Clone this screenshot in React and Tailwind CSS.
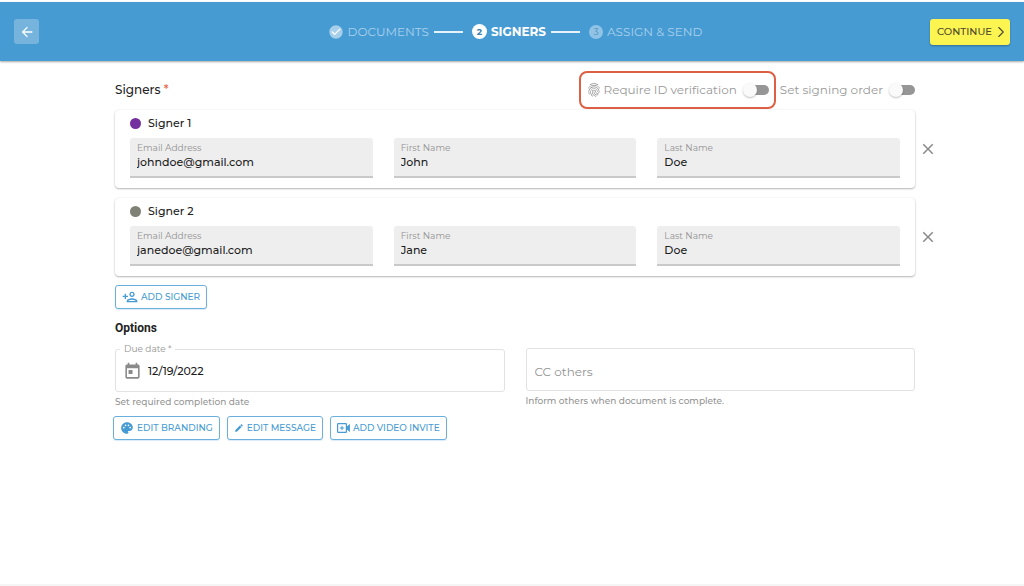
import React, { useState } from 'react';
import {
  MdArrowBack,
  MdCheckCircle,
  MdClose,
  MdEdit,
  MdFingerprint,
  MdOutlinePersonAdd,
  MdPalette,
  MdToday,
} from 'react-icons/md';
import { FiChevronRight } from 'react-icons/fi';

const INITIAL_SIGNERS = [
  { id: 1, dot: 'bg-[#742f9e]', email: 'johndoe@gmail.com', first: 'John', last: 'Doe' },
  { id: 2, dot: 'bg-[#7f8174]', email: 'janedoe@gmail.com', first: 'Jane', last: 'Doe' },
];

function VideoPlusIcon() {
  return (
    <svg viewBox="0 0 13 10" className="h-2.5 w-[13px] shrink-0" fill="none" stroke="currentColor" aria-hidden="true">
      <rect x="0.6" y="0.6" width="8.8" height="8.8" rx="0.6" strokeWidth="1.2" />
      <path d="M5 2.8v4.4M2.8 5h4.4" strokeWidth="1" />
      <path d="M9.6 4.3 12.6 1.6v6.8L9.6 5.7z" fill="currentColor" strokeWidth="0.8" />
    </svg>
  );
}

function Header() {
  return (
    <header className="mt-0.5 grid h-[59px] grid-cols-[1fr_auto_1fr] items-center bg-[#469bd3] px-3.5 shadow-[0_1px_2px_rgba(0,0,0,0.35)]">
      <button
        type="button"
        aria-label="Back"
        className="flex size-[25px] items-center justify-center rounded-[3px] bg-[#76b4de] text-white"
      >
        <MdArrowBack className="size-4" />
      </button>
      <ol className="flex items-center gap-[5px] pl-1.5 text-xs text-[#a9d0eb]">
        <li className="flex items-center gap-1">
          <MdCheckCircle className="size-4 rounded-full text-[#a6cfeb] [background:radial-gradient(white_50%,transparent_52%)]" />
          <span>DOCUMENTS</span>
        </li>
        <li aria-hidden="true" className="h-0.5 w-[29px] bg-[#e6f2fa]" />
        <li aria-current="step" className="ml-1 flex items-center gap-1 font-bold text-white">
          <span className="flex size-[15px] items-center justify-center rounded-full bg-white text-[9px] text-[#3d7fae]">2</span>
          <span>SIGNERS</span>
        </li>
        <li aria-hidden="true" className="h-0.5 w-[29px] bg-[#e6f2fa]" />
        <li className="ml-1 flex items-center gap-1">
          <span className="flex size-3.5 items-center justify-center rounded-full bg-[#90c3e6] text-[9px] text-[#4b8fc0]">3</span>
          <span>ASSIGN &amp; SEND</span>
        </li>
      </ol>
      <button
        type="button"
        className="flex h-[26px] items-center justify-self-end rounded-[3px] bg-[#fcf451] pl-[7px] text-[10px] font-medium text-[#4d4a2e] shadow-[0_1px_2px_rgba(0,0,0,0.3)]"
      >
        CONTINUE
        <FiChevronRight className="size-[18px]" strokeWidth={1.5} />
      </button>
    </header>
  );
}

function Toggle({ label, icon, checked, onChange }) {
  return (
    <label className="flex items-center gap-1.5 text-xs whitespace-nowrap text-[#999]">
      <span className="flex items-center gap-px">
        {icon}
        {label}
      </span>
      <input
        type="checkbox"
        role="switch"
        checked={checked}
        onChange={(e) => onChange(e.target.checked)}
        className="relative h-3.5 w-[26px] appearance-none before:absolute before:top-0.5 before:right-0 before:h-2.5 before:w-[21px] before:rounded-full before:bg-[#969696] after:absolute after:top-0 after:left-0 after:size-3.5 after:rounded-full after:bg-[#fafafa] after:shadow-[0_1px_2px_rgba(0,0,0,0.25)] checked:before:bg-[#469bd3] checked:after:left-3"
      />
    </label>
  );
}

function Field({ label, value, type = 'text' }) {
  return (
    <label className="flex h-10 min-w-0 flex-col rounded-t-[3px] border-b-2 border-[#c9c9c9] bg-[#eeeeee] px-[7px] pt-1">
      <span className="text-[9px] leading-3 text-[#929292]">{label}</span>
      <input
        type={type}
        defaultValue={value}
        className="h-4 w-full bg-transparent text-[11px] font-medium text-[#1c1c1c] outline-none"
      />
    </label>
  );
}

function SignerRow({ signer, index, onRemove }) {
  return (
    <li className="flex items-center gap-1">
      <section className="min-w-0 flex-1 rounded-[4px] bg-white px-[15px] pt-1 pb-2.5 shadow-[0_1px_2px_rgba(0,0,0,0.28),0_0_2px_rgba(0,0,0,0.08)]">
        <h2 className="flex h-[18px] items-center gap-[7px] text-[11px] font-medium text-[#222]">
          <span className={`size-[11px] rounded-full ${signer.dot}`} />
          Signer {index}
        </h2>
        <div className="mt-1.5 grid grid-cols-3 gap-[21px]">
          <Field label="Email Address" type="email" value={signer.email} />
          <Field label="First Name" value={signer.first} />
          <Field label="Last Name" value={signer.last} />
        </div>
      </section>
      <button
        type="button"
        aria-label={`Remove signer ${index}`}
        onClick={onRemove}
        className="flex size-[18px] items-center justify-center text-[#8a8a8a]"
      >
        <MdClose className="size-[18px] shrink-0" />
      </button>
    </li>
  );
}

function OutlineButton({ icon, children, onClick }) {
  return (
    <button
      type="button"
      onClick={onClick}
      className="flex h-6 items-center gap-[3px] rounded-[3px] border border-[#6bb0dc] bg-white px-1.5 text-[9px] font-medium whitespace-nowrap text-[#469bd3] shadow-[0_1px_1px_rgba(70,155,211,0.2)]"
    >
      {icon}
      {children}
    </button>
  );
}

export default function App() {
  const [signers, setSigners] = useState(INITIAL_SIGNERS);
  const [idCheck, setIdCheck] = useState(false);
  const [ordered, setOrdered] = useState(false);

  const addSigner = () =>
    setSigners([...signers, { id: Date.now(), dot: 'bg-[#469bd3]', email: '', first: '', last: '' }]);

  return (
    <div className="flex min-h-screen flex-col border-b-2 border-[#f5f5f5] bg-white font-['Montserrat','Inter',sans-serif]">
      <Header />
      <main className="flex-1 pt-2.5 pr-[87px] pb-6 pl-[115px]">
        <div className="mr-[22px] flex items-center gap-1">
          <h1 className="flex-1 text-xs font-medium text-[#222]">
            Signers <span className="text-[#e8674a]">*</span>
          </h1>
          <div className="flex h-[38px] items-center rounded-lg border-2 border-[#dd6044] px-[5px]">
            <Toggle
              label="Require ID verification"
              icon={<MdFingerprint className="size-4 text-[#8f8f8f]" />}
              checked={idCheck}
              onChange={setIdCheck}
            />
          </div>
          <Toggle label="Set signing order" checked={ordered} onChange={setOrdered} />
        </div>

        <ul className="mt-px flex flex-col gap-2.5">
          {signers.map((signer, i) => (
            <SignerRow
              key={signer.id}
              signer={signer}
              index={i + 1}
              onRemove={() => setSigners(signers.filter((s) => s.id !== signer.id))}
            />
          ))}
        </ul>

        <div className="mt-[9px] flex">
          <OutlineButton onClick={addSigner} icon={<MdOutlinePersonAdd className="size-4" />}>
            ADD SIGNER
          </OutlineButton>
        </div>

        <h2 className="mt-[11px] font-['Roboto',sans-serif] text-xs leading-4 font-bold text-[#222]">Options</h2>

        <div className="mt-2 mr-[22px] grid grid-cols-2 gap-[21px]">
          <div>
            <fieldset className="h-12 min-w-0 rounded-[3px] border border-[#e2e2e2] px-1">
              <legend className="px-1 text-[9px] leading-[10px] text-[#929292]">
                <label htmlFor="due-date">Due date *</label>
              </legend>
              <div className="flex h-[34px] items-center gap-1.5 pl-[3px]">
                <MdToday className="size-[19px] shrink-0 text-[#8a8a8a]" />
                <input
                  id="due-date"
                  type="text"
                  defaultValue="12/19/2022"
                  aria-describedby="due-help"
                  className="w-full min-w-0 text-[11px] font-medium text-[#1c1c1c] outline-none"
                />
              </div>
            </fieldset>
            <p id="due-help" className="mt-1 text-[9px] leading-3 font-medium text-[#959595]">
              Set required completion date
            </p>
          </div>
          <div className="pt-1">
            <input
              type="text"
              aria-label="CC others"
              aria-describedby="cc-help"
              placeholder="CC others"
              className="block h-[43px] w-full rounded-[3px] border border-[#e2e2e2] px-2 pt-1 text-xs text-[#222] outline-none placeholder:text-[#929292]"
            />
            <p id="cc-help" className="mt-1 text-[9px] leading-3 font-medium text-[#959595]">
              Inform others when document is complete.
            </p>
          </div>
        </div>

        <div className="mt-2 -ml-0.5 flex gap-[7px]">
          <OutlineButton icon={<MdPalette className="size-3.5" />}>EDIT BRANDING</OutlineButton>
          <OutlineButton icon={<MdEdit className="size-2.5" />}>EDIT MESSAGE</OutlineButton>
          <OutlineButton icon={<VideoPlusIcon />}>ADD VIDEO INVITE</OutlineButton>
        </div>
      </main>
    </div>
  );
}
